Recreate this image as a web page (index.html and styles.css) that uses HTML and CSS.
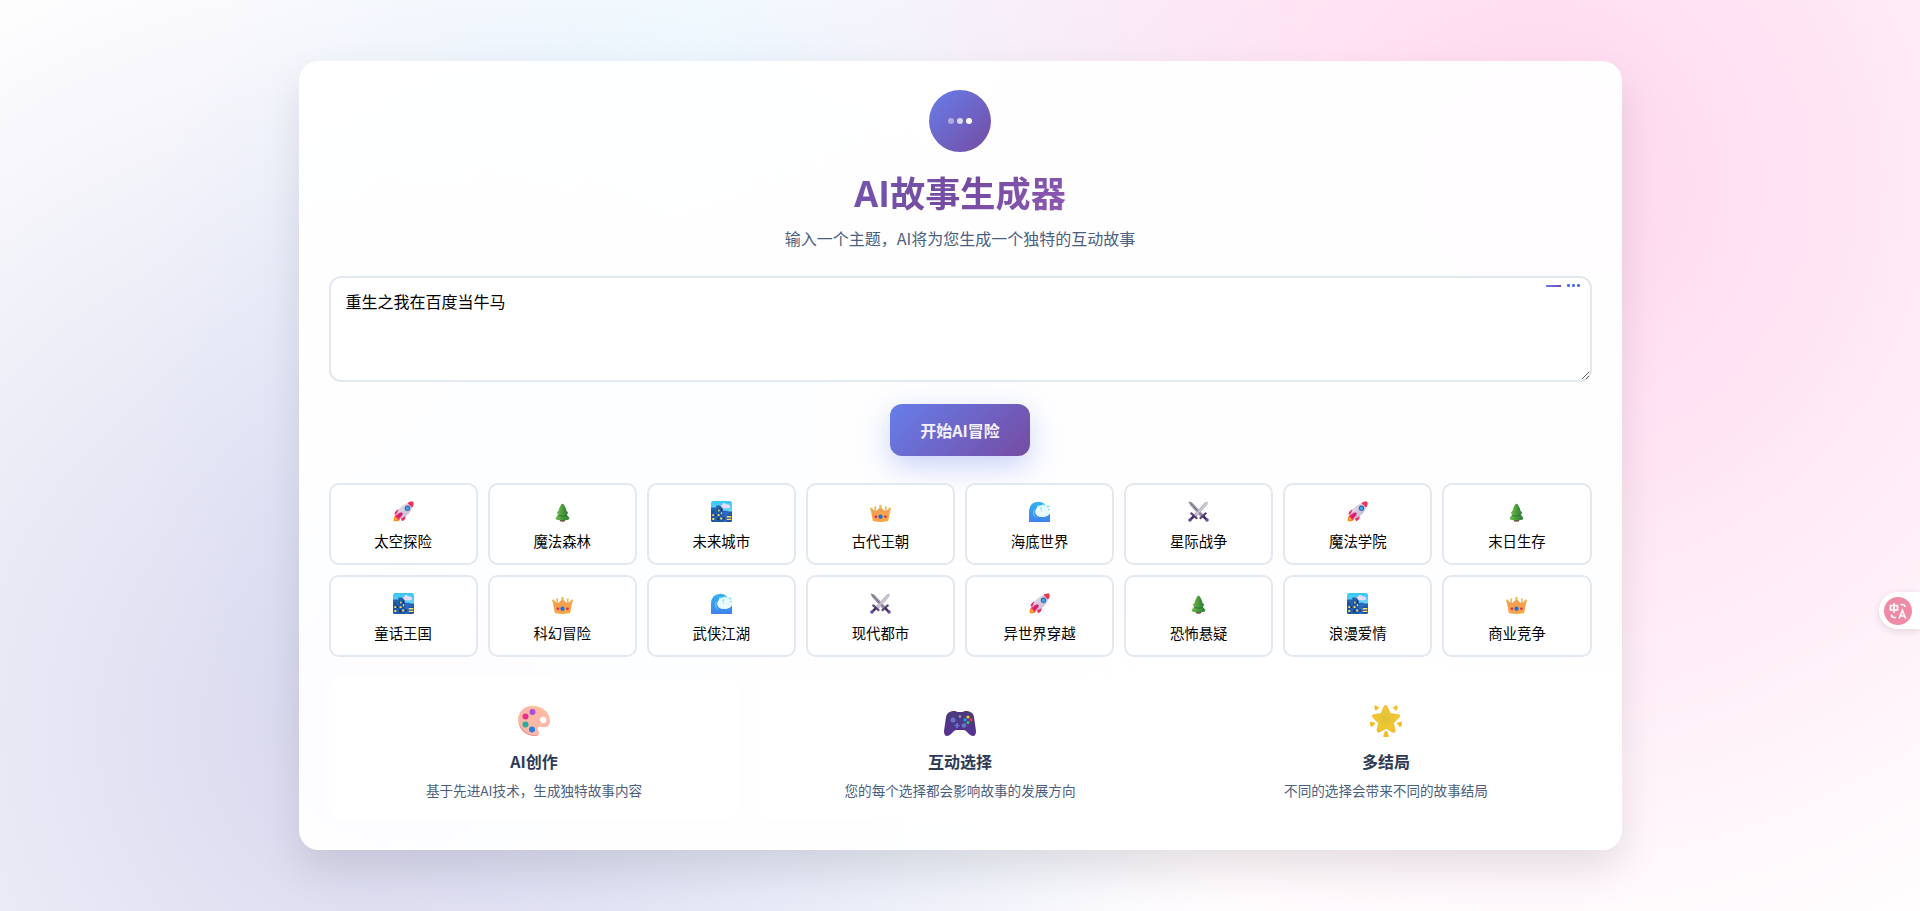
FILE: index.html
```html
<!DOCTYPE html>
<html lang="zh-CN">
<head>
<meta charset="utf-8">
<title>AI故事生成器</title>
<link rel="stylesheet" href="styles.css">
</head>
<body>
<svg class="defs" width="0" height="0" aria-hidden="true">
  <defs>
    <linearGradient id="gBody" x1="0" y1="0" x2="1" y2="1"><stop offset="0" stop-color="#e9e3f2"/><stop offset="1" stop-color="#bcb0cc"/></linearGradient>
    <linearGradient id="gTree" x1="0" y1="0" x2="1" y2="0"><stop offset="0" stop-color="#6cba48"/><stop offset=".5" stop-color="#4b9a3c"/><stop offset="1" stop-color="#2c7e3c"/></linearGradient>
    <linearGradient id="gSky" x1="0" y1="0" x2="0" y2="1"><stop offset="0" stop-color="#35c8f5"/><stop offset="1" stop-color="#a4e0fb"/></linearGradient>
    <linearGradient id="gCrown" x1="0" y1="0" x2="1" y2="1"><stop offset="0" stop-color="#f0a04a"/><stop offset=".6" stop-color="#fba04e"/><stop offset="1" stop-color="#f0b030"/></linearGradient>
    <linearGradient id="gWave" x1="0" y1="0" x2="0" y2="1"><stop offset="0" stop-color="#35b2f2"/><stop offset="1" stop-color="#3f82ee"/></linearGradient>
    <linearGradient id="gPad" x1="0" y1="0" x2="0" y2="1"><stop offset="0" stop-color="#4b3b7c"/><stop offset="1" stop-color="#553293"/></linearGradient>
    <radialGradient id="gStar" cx=".5" cy=".5" r=".6"><stop offset="0" stop-color="#dfc03a"/><stop offset=".7" stop-color="#f4c82e"/><stop offset="1" stop-color="#efae25"/></radialGradient>
  </defs>
  <symbol id="rocket" viewBox="0 0 32 32">
    <path d="M4 21c-3 3-3 6-3 10 4 0 7 0 10-3l-3-6z" fill="#f98a1c"/>
    <path d="M3 29c0-3 1-5 3-6l3 3c-1 2-3 3-6 3z" fill="#fcb938"/>
    <path d="M10 13c-4 0-7 3-8 7l6 1zM19 22c1 4-1 7-5 9l-3-6z" fill="#ef2d63"/>
    <path d="M5 21C8 11 16 3 30 2c0 13-7 21-19 25z" fill="url(#gBody)"/>
    <path d="M22 3c2-2 6-3 9-2 1 3 0 7-2 9z" fill="#f03355"/>
    <path d="M11 17l4 4-7 8-5-6z" fill="#f42d73"/>
    <path d="M13 17l2 2-7 7-2-2z" fill="#c71e6c"/>
    <circle cx="22" cy="11" r="4" fill="#36518c"/><circle cx="22" cy="11" r="2.800" fill="#3ba6ef"/>
  </symbol>
  <symbol id="tree" viewBox="0 0 32 32">
    <path d="M12 27h8v4q-4 1.500-8 0z" fill="#6c3c45"/>
    <path d="M16 13L6 25q-1 3 3 4 7 1.500 14 0 4-1 3-4z" fill="url(#gTree)"/>
    <path d="M16 7L8 17q-1 3 2 4 6 1.500 12 0 3-1 2-4z" fill="url(#gTree)"/>
    <path d="M9 21q7 3 14 0l-1 1.500q-6 2-12 0z" fill="#216c2e"/>
    <path d="M16 4q-1.500 0-2 1.500L10 13q6 3 12 0L18 5.500Q17.500 4 16 4z" fill="url(#gTree)"/>
  </symbol>
  <symbol id="city" viewBox="0 0 32 32">
    <rect width="32" height="32" rx="3.500" fill="url(#gSky)"/>
    <path d="M17 11q-5-1-3-4 1-1 3-1 0-3 3-3 2 0 3 2 5-1 6 3 1 3-3 3z" fill="#eadcf8"/>
    <path d="M8 7h6l3 3v5h8v1h7v13q0 3-3 3H3q-3 0-3-3V10h8z" fill="#2264ad"/>
    <path d="M0 14h6v18H3q-3 0-3-3zM9 11h9v21H9z" fill="#1c56a3"/>
    <path d="M19 16h8v16h-8z" fill="#2b69c5"/><path d="M24 21h8v8q0 3-3 3h-5z" fill="#24539d"/>
    <path d="M2 20h3v3H2zM2 26h3v3H2zM11 13h2v3h-2zM15 17h2v3h-2zM10 20h3v3h-3zM14 25h3v3h-3zM24 23h7v2h-7zM24 27h7v2h-7z" fill="#ffe05c"/>
    <path d="M15 12h2v3h-2zM10 26h2v3h-2zM19 25h2v3h-2zM6 20h2v3H6z" fill="#17264e"/>
  </symbol>
  <symbol id="crown" viewBox="0 0 32 32">
    <path d="M1 13q0-2 2-1l5 3 2 0 5-5h2l5 5 2 0 5-3q2-1 2 1l-3 16q0 2-2 2-10 2-20 0-2 0-2-2z" fill="url(#gCrown)"/>
    <path d="M8 16V9M24 16V9M16 12V7" stroke="#f0ac43" stroke-width="2"/>
    <circle cx="2" cy="12" r="2" fill="#f5b750"/><circle cx="30" cy="12" r="2" fill="#f5b750"/><circle cx="16" cy="8" r="2" fill="#f5c24d"/><circle cx="8" cy="9.500" r="1.500" fill="#f3bb54"/><circle cx="24" cy="9.500" r="1.500" fill="#f5c24d"/>
    <circle cx="16" cy="24" r="3.300" fill="#1673d8"/><circle cx="9" cy="24" r="2" fill="#df274f"/><circle cx="23.500" cy="24" r="2" fill="#df274f"/>
  </symbol>
  <symbol id="wave" viewBox="0 0 32 32">
    <path d="M0 32V17Q0 1 15 1q6 0 9 4l2 5-12-1q-6 4-4 10 3 6 10 5 8-1 12-5v13z" fill="url(#gWave)"/>
    <path d="M13 8q2-2 5-1 2-2 5-1 3 0 4 3 4 2 3 6l2 3q-2 5-8 6-6 1-10-2-5-5-1-9-2-3 0-5z" fill="#e9fbff"/>
    <path d="M9 12q-4 11 5 14-8-1-8-8 0-4 3-6z" fill="#62d3f7"/>
    <path d="M12 7h3v2h-3zM20 5h4v2h-4zM17 10h3v2h-3zM27 7h4v3h-4zM29 12h3v2h-3z" fill="#7ee3f8"/><circle cx="19" cy="15" r="1" fill="#65c9ed"/>
  </symbol>
  <symbol id="swords" viewBox="0 0 32 32">
    <path d="M1 1l5 1 17 18-4 4L3 6z" fill="#9a93a6"/><path d="M31 1l-5 1L9 20l4 4L29 6z" fill="#bdb7c7"/>
    <path d="M2 1l19 21" stroke="#6e657d"/><path d="M30 2L12 21" stroke="#ebe7f0" stroke-width="1"/>
    <path d="M5 19l8 7M27 19l-8 7" stroke="#5d477d" stroke-width="3.500" stroke-linecap="round"/>
    <path d="M9 23l-5 5M23 23l5 5" stroke="#433058" stroke-width="4"/>
    <circle cx="3" cy="29" r="2.700" fill="#6b48a5"/><circle cx="29" cy="29" r="2.700" fill="#6b48a5"/>
  </symbol>
  <symbol id="palette" viewBox="0 0 32 32">
    <path d="M14 1C6 1 0 7 0 15c0 9 8 16 17 16 4 0 5-3 3-6-1-2 0-4 3-3 6 1 9-2 9-6C32 7 24 1 14 1z" fill="#fcb8a4"/>
    <path d="M1 18c3 8 9 12 16 12 3 0 4-2 3-4 1 3 0 5-3 5C9 31 2 26 1 18z" fill="#ef9196"/>
    <path d="M12 1.500q16-1 19 13" fill="none" stroke="#fcc999" stroke-width="1"/>
    <circle cx="25.200" cy="15" r="3.600" fill="#fff" stroke="#f5ac95" stroke-width=".5"/>
    <circle cx="14.500" cy="7" r="3" fill="#aa4ed8"/><circle cx="7.500" cy="11.500" r="3" fill="#e6308d"/><circle cx="7.500" cy="19.500" r="3" fill="#28ad9e"/><circle cx="14" cy="24.500" r="3" fill="#247fdf"/>
  </symbol>
  <symbol id="pad" viewBox="0 0 32 32">
    <path d="M5 9q0-3 5-3 4 0 4 3M18 9q0-3 4-3 5 0 5 3" fill="#622341"/>
    <path d="M7 7h18q4 0 5 5l2 14q0 5-3 5-2 0-4-2l-3-3q-1-1-3-1h-6q-2 0-3 1l-3 3q-2 2-4 2-3 0-3-5L2 12q1-5 5-5z" fill="url(#gPad)"/>
    <circle cx="9" cy="15" r="2.500" fill="#6775c9"/><circle cx="20" cy="20.500" r="2.300" fill="#6775c9"/>
    <path d="M13 18v5M10.500 20.500h5" stroke="#6775d2" stroke-width="1.700"/>
    <circle cx="16" cy="11.500" r="1.300" fill="#a994bc"/><circle cx="24" cy="12" r="1.600" fill="#ffc82d"/><circle cx="21" cy="14.800" r="1.600" fill="#15a9f2"/><circle cx="27" cy="14.800" r="1.600" fill="#f03859"/><circle cx="24" cy="17.500" r="1.600" fill="#2fc875"/>
  </symbol>
  <symbol id="star" viewBox="0 0 32 32">
    <path d="M14 1.500q1.500-3 3 0l3.500 7 7.500 1q3 .5 1 3l-5.500 5.500 1.500 7.500q0 3-2.500 1.500L16 23.500 9.500 27Q7 28 7 25l1.500-7L3 12.500q-2-2.500 1-3l7-1z" fill="url(#gStar)" stroke="#e9ae22" stroke-width=".6"/>
    <path d="M5 .5l4 2-3 3q-2-2-1-5zM27 .5l-4 2 3 3q2-2 1-5zM0 17l5 1-3 4q-2-1-2-5zM32 17l-5 1 3 4q2-1 2-5zM15 26.500h2l1.500 5q-2.500 1-5 0z" fill="#f0bd25" stroke="#f0bd25" stroke-linejoin="round" stroke-width=".6"/>
  </symbol>
</svg>

<main class="card">
  <div class="logo"><i class="dot dot-1"></i><i class="dot dot-2"></i><i class="dot"></i></div>
  <h1 class="title">AI故事生成器</h1>
  <p class="subtitle">输入一个主题，AI将为您生成一个独特的互动故事</p>
  <div class="input-wrap">
    <textarea class="topic">重生之我在百度当牛马</textarea>
    <div class="hint"><i class="line"></i><i class="pip"></i><i class="pip"></i><i class="pip"></i></div>
  </div>
  <button class="start">开始AI冒险</button>
  <div class="themes">
    <div class="theme"><svg><use href="#rocket"/></svg><span>太空探险</span></div>
    <div class="theme"><svg><use href="#tree"/></svg><span>魔法森林</span></div>
    <div class="theme"><svg><use href="#city"/></svg><span>未来城市</span></div>
    <div class="theme"><svg><use href="#crown"/></svg><span>古代王朝</span></div>
    <div class="theme"><svg><use href="#wave"/></svg><span>海底世界</span></div>
    <div class="theme"><svg><use href="#swords"/></svg><span>星际战争</span></div>
    <div class="theme"><svg><use href="#rocket"/></svg><span>魔法学院</span></div>
    <div class="theme"><svg><use href="#tree"/></svg><span>末日生存</span></div>
    <div class="theme"><svg><use href="#city"/></svg><span>童话王国</span></div>
    <div class="theme"><svg><use href="#crown"/></svg><span>科幻冒险</span></div>
    <div class="theme"><svg><use href="#wave"/></svg><span>武侠江湖</span></div>
    <div class="theme"><svg><use href="#swords"/></svg><span>现代都市</span></div>
    <div class="theme"><svg><use href="#rocket"/></svg><span>异世界穿越</span></div>
    <div class="theme"><svg><use href="#tree"/></svg><span>恐怖悬疑</span></div>
    <div class="theme"><svg><use href="#city"/></svg><span>浪漫爱情</span></div>
    <div class="theme"><svg><use href="#crown"/></svg><span>商业竞争</span></div>
  </div>
  <div class="features">
    <section class="feature"><svg><use href="#palette"/></svg><h3>AI创作</h3><p>基于先进AI技术，生成独特故事内容</p></section>
    <section class="feature"><svg><use href="#pad"/></svg><h3>互动选择</h3><p>您的每个选择都会影响故事的发展方向</p></section>
    <section class="feature"><svg><use href="#star"/></svg><h3>多结局</h3><p>不同的选择会带来不同的故事结局</p></section>
  </div>
</main>

<div class="translate">
  <svg viewBox="0 0 28 28" fill="none" stroke="#fff" stroke-width="1.700">
    <circle cx="14" cy="14" r="14" fill="#f08ba7" stroke="none"/>
    <path d="M6.500 8.500h7v4.500h-7zM10 6v10M16.500 7.500h2q2.500 0 2.500 2.500M7.500 17.500q0 3 2.500 3h2M15.200 21.500l3.200-8 3.200 8M16.200 19h4.500"/>
  </svg>
</div>
</body>
</html>
```
FILE: styles.css
```css
* { box-sizing: border-box; margin: 0; padding: 0; }

body {
  height: 911px;
  overflow: hidden;
  padding: 61px 298.5px 0;
  font-family: "Noto Sans CJK SC", sans-serif;
  background:
    radial-gradient(circle at 20% 80%, rgba(120, 119, 198, .3) 0%, transparent 50%),
    radial-gradient(circle at 80% 20%, rgba(255, 119, 198, .3) 0%, transparent 50%),
    radial-gradient(circle at 40% 40%, rgba(120, 219, 255, .2) 0%, transparent 50%),
    #fff;
}

.defs { position: absolute; }

.card {
  display: flex;
  flex-direction: column;
  align-items: center;
  height: 789px;
  padding: 29px 30px 30px;
  border-radius: 20px;
  background: rgba(255, 255, 255, .95);
  box-shadow: 0 20px 40px rgba(0, 0, 0, .1);
}

.logo {
  display: flex;
  align-items: center;
  justify-content: center;
  gap: 3px;
  width: 62px;
  height: 62px;
  flex: none;
  border-radius: 50%;
  background: linear-gradient(135deg, #667eea, #764ba2);
}
.dot { width: 6px; height: 6px; border-radius: 50%; background: #fff; }
.dot-1 { opacity: .45; }
.dot-2 { opacity: .75; }

.title {
  width: 100%;
  margin-top: 15px;
  font-family: "Open Sans", "Noto Sans CJK SC", sans-serif;
  font-size: 35.2px;
  line-height: 52px;
  font-weight: 700;
  text-align: center;
  color: transparent;
  background: linear-gradient(135deg, #667eea 0%, #764ba2 50%, #f093fb 100%);
  background-clip: text;
  -webkit-background-clip: text;
}

.subtitle { margin-top: 7px; font-size: 16px; line-height: 24px; color: #4a5f80; }

.input-wrap { position: relative; width: 100%; height: 106px; margin-top: 25.5px; }
.topic {
  display: block;
  width: 100%;
  height: 106px;
  padding: 11px 15px;
  border: 2px solid #e2e8f0;
  border-radius: 12px;
  background: #fff;
  color: #000;
  font: 400 16px/24px "Noto Sans CJK SC", sans-serif;
  resize: vertical;
}
.hint { position: absolute; top: 8px; right: 11.5px; display: flex; align-items: center; gap: 2px; }
.line { width: 15px; height: 2px; margin: 1px 4px 0 0; background: linear-gradient(90deg, #667eea, #764ba2); }
.pip { width: 3px; height: 3px; border-radius: 1px; background: #4f6fe8; }

.start {
  width: 140px;
  height: 52px;
  flex: none;
  margin-top: 22px;
  border: 0;
  border-radius: 12px;
  background: linear-gradient(135deg, #667eea, #764ba2);
  box-shadow: 0 10px 30px rgba(102, 126, 234, .35);
  color: #f3f0fb;
  font: 700 16px/24px "Noto Sans CJK SC", sans-serif;
}

.themes {
  display: grid;
  grid-template-columns: repeat(8, 1fr);
  gap: 10px;
  width: 100%;
  margin-top: 27px;
}
.theme {
  display: flex;
  flex-direction: column;
  align-items: center;
  height: 82px;
  padding-top: 16px;
  border: 2px solid #e2e8f0;
  border-radius: 10px;
  background: #fff;
  color: #000;
  font-size: 14.4px;
  line-height: 22px;
}
.theme svg { width: 21px; height: 21px; margin-bottom: 8px; }

.features {
  display: grid;
  grid-template-columns: repeat(3, 1fr);
  gap: 15px;
  width: 100%;
  margin-top: 20px;
}
.feature {
  display: flex;
  flex-direction: column;
  align-items: center;
  height: 143px;
  padding-top: 28px;
  border-radius: 12px;
  background: rgba(255, 255, 255, .7);
}
.feature svg { width: 32px; height: 32px; }
.feature h3 { margin-top: 12px; font-size: 16px; line-height: 24px; font-weight: 700; color: #2d3a55; }
.feature p { margin-top: 7px; font-size: 13.6px; line-height: 20px; color: #4a5f80; }

/* Browser-edge translate button, floats over the page */
.translate {
  position: absolute;
  top: 592px;
  right: 0;
  width: 41px;
  height: 37px;
  padding: 5px 0 0 5px;
  border-radius: 19px 0 0 19px;
  background: #fff;
  box-shadow: 0 2px 8px rgba(0, 0, 0, .12);
}
.translate svg { display: block; width: 28px; height: 28px; }
```
